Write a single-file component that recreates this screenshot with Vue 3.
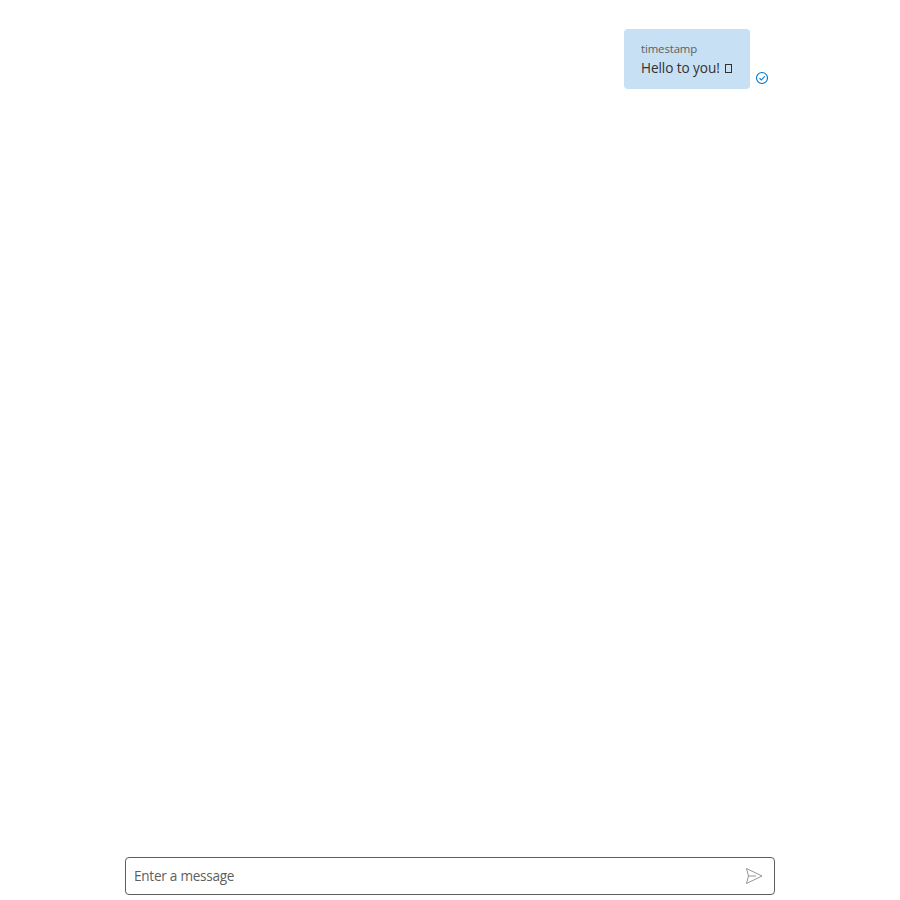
<script setup>
const message = { time: 'timestamp', text: 'Hello to you!' }
</script>

<template>
  <main class="chat">
    <section class="thread">
      <div class="row">
        <div class="bubble">
          <div class="time">{{ message.time }}</div>
          <div class="text">{{ message.text }}<i class="box"></i></div>
        </div>
        <svg class="status" viewBox="0 0 14 14" fill="none" stroke="#0078d4">
          <circle cx="7" cy="7" r="5.5" stroke-width="1.15" /><path d="M4.5 7.2l1.8 1.8 3.4-3.7" stroke-width="1.1" />
        </svg>
      </div>
    </section>
    <div class="sendbox">
      <input class="field" placeholder="Enter a message" />
      <svg class="send" viewBox="0 0 20 20" fill="none" stroke="#979593">
        <path d="M2.5 2.5L18 10 2.5 17.5 4.5 10ZM4.5 10H12" stroke-linejoin="round" />
      </svg>
    </div>
  </main>
</template>

<style>
body { background: #fff; }
</style>
<style scoped>
.chat { box-sizing: border-box; height: 900px; width: 650px; margin: 0 auto; padding: 29px 0 5px; display: flex; flex-direction: column; font-family: "Open Sans", "Noto Sans", sans-serif; }
.thread { flex: 1; }
.row { display: flex; justify-content: flex-end; align-items: flex-end; padding-right: 6px; }
.bubble { box-sizing: border-box; width: 126px; height: 60px; padding: 12px 16px 0 17px; border-radius: 4px; background: #c7e0f4; white-space: nowrap; }
.time { font-size: 11.4px; line-height: 16px; letter-spacing: -0.12px; color: #605e5c; }
.text { font-size: 13.6px; line-height: 22px; letter-spacing: -0.08px; color: #323130; }
.box { display: inline-block; box-sizing: border-box; width: 7px; height: 9px; margin-left: 5px; border: 1px solid #323130; }
.status { width: 14px; height: 14px; margin: 0 0 4px 5px; }
.sendbox { box-sizing: border-box; height: 38px; border: 1px solid #605e5c; border-radius: 4px; display: flex; align-items: center; padding: 0 10px 0 8px; }
.field { flex: 1; border: 0; outline: 0; padding: 0 0 1px; background: none; font: 13.6px "Open Sans", "Noto Sans", sans-serif; letter-spacing: -0.27px; color: #323130; }
.field::placeholder { color: #605e5c; opacity: 1; }
.send { width: 20px; height: 20px; }
</style>
